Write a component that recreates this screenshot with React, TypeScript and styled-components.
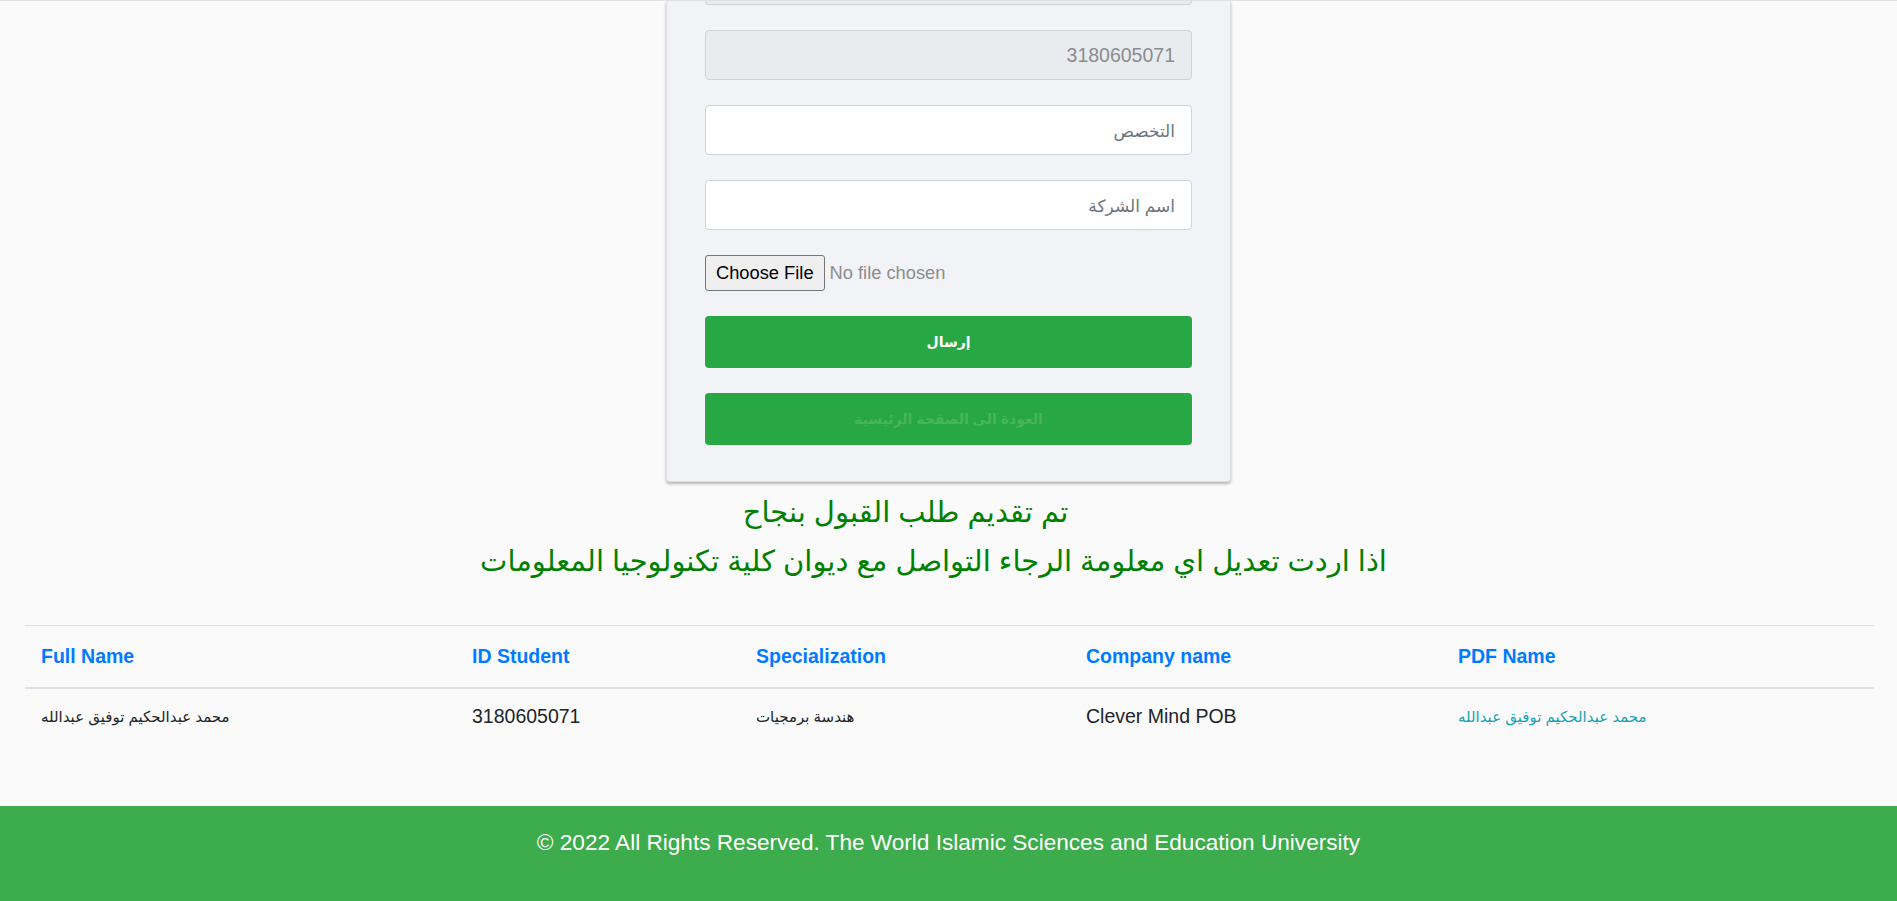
import React from "react";
import styled, { createGlobalStyle } from "styled-components";

const GlobalStyle = createGlobalStyle`
  html, body {
    margin: 0;
    padding: 0;
    background: #fafafa;
    font-family: "Liberation Sans", "DejaVu Sans", Arial, sans-serif;
    color: #212529;
  }
  * { box-sizing: border-box; }
`;

const Page = styled.div`
  display: flex;
  flex-direction: column;
  min-height: 901px;
`;

const TopRule = styled.div`
  height: 1px;
  background: #e2e2e2;
`;

const Main = styled.main`
  display: flex;
  flex-direction: column;
  align-items: center;
`;

const Card = styled.form`
  width: 565px;
  background: #f2f3f7;
  border: 1px solid #e0e0e3;
  border-top: none;
  border-radius: 0 0 4px 4px;
  box-shadow: 0 2px 3px rgba(0, 0, 0, 0.28);
  padding: 0 38px 36px;
  display: flex;
  flex-direction: column;
  gap: 25px;
`;

const StubField = styled.div`
  height: 4px;
  background: #e9ecef;
  border: 1px solid #ced4da;
  border-top: none;
  border-radius: 0 0 4px 4px;
`;

const Field = styled.input`
  height: 50px;
  width: 100%;
  border: 1px solid #ced4da;
  border-radius: 4px;
  background: #ffffff;
  padding: 0 16px;
  direction: rtl;
  text-align: right;
  font-family: "Liberation Sans", "DejaVu Sans", sans-serif;
  font-size: 19.5px;
  color: #495057;
  outline: none;

  &::placeholder {
    color: #6c757d;
    font-size: 17px;
  }

  &:disabled {
    background: #e9ecef;
    color: #8a8d90;
  }
`;

const FileRow = styled.div`
  display: flex;
  align-items: center;
  gap: 5px;
  height: 36px;
`;

const FileButton = styled.button`
  height: 36px;
  padding: 0 10px;
  border: 1px solid #767676;
  border-radius: 3px;
  background: #efefef;
  color: #000;
  font-family: "Liberation Sans", sans-serif;
  font-size: 18.3px;
  cursor: pointer;
`;

const FileStatus = styled.span`
  font-family: "Liberation Sans", sans-serif;
  font-size: 18.3px;
  color: #8d8d8d;
`;

const ActionButton = styled.button<{ $muted?: boolean }>`
  height: 52px;
  width: 100%;
  border: none;
  border-radius: 4px;
  background: #28a745;
  color: ${(p) => (p.$muted ? "#48b557" : "#ffffff")};
  font-family: "Liberation Sans", "DejaVu Sans", sans-serif;
  font-weight: 700;
  font-size: 14px;
  direction: rtl;
  cursor: pointer;
`;

const Notice = styled.div`
  width: 100%;
  margin-top: 6px;
  display: flex;
  flex-direction: column;
  align-items: stretch;
`;

const NoticeLine = styled.h3<{ $shift: number }>`
  margin: 0;
  direction: rtl;
  text-align: center;
  font-family: "Liberation Sans", "DejaVu Sans", sans-serif;
  font-weight: 400;
  font-size: 29px;
  line-height: 49px;
  color: #008000;
  padding-right: ${(p) => p.$shift}px;
`;

const TableWrap = styled.section`
  padding: 39px 23px 0 25px;
`;

const Table = styled.table`
  width: 100%;
  border-collapse: collapse;
  table-layout: fixed;
  font-size: 19.5px;
`;

const HeadCell = styled.th<{ $w: number }>`
  width: ${(p) => p.$w}px;
  text-align: left;
  padding: 16px 16px;
  line-height: 29px;
  font-weight: 700;
  color: #007bff;
  border-top: 1px solid #dee2e6;
  border-bottom: 2px solid #dee2e6;
`;

const Cell = styled.td<{ $arabic?: boolean; $link?: boolean }>`
  padding: 13px 16px;
  line-height: 29px;
  color: ${(p) => (p.$link ? "#17a2b8" : "#212529")};
  font-size: ${(p) => (p.$arabic ? "15px" : "19.5px")};
  vertical-align: top;
`;

const Footer = styled.footer`
  margin-top: 62px;
  flex: 1;
  min-height: 95px;
  background: #3cac4c;
  color: #ffffff;
  text-align: center;
  padding-top: 22px;
  font-size: 22.6px;
  line-height: 29px;
`;

const columns = [
  { label: "Full Name", w: 431 },
  { label: "ID Student", w: 284 },
  { label: "Specialization", w: 330 },
  { label: "Company name", w: 372 },
  { label: "PDF Name", w: 432 },
];

export default function App() {
  return (
    <>
      <GlobalStyle />
      <Page>
        <TopRule />
        <Main>
          <Card onSubmit={(e) => e.preventDefault()}>
            <StubField />
            <Field disabled value="3180605071" readOnly />
            <Field placeholder="التخصص" />
            <Field placeholder="اسم الشركة" />
            <FileRow>
              <FileButton type="button">Choose File</FileButton>
              <FileStatus>No file chosen</FileStatus>
            </FileRow>
            <ActionButton type="submit">إرسال</ActionButton>
            <ActionButton type="button" $muted>
              العودة الى الصفحة الرئيسية
            </ActionButton>
          </Card>
          <Notice>
            <NoticeLine $shift={86}>تم تقديم طلب القبول بنجاح</NoticeLine>
            <NoticeLine $shift={30}>
              اذا اردت تعديل اي معلومة الرجاء التواصل مع ديوان كلية تكنولوجيا المعلومات
            </NoticeLine>
          </Notice>
        </Main>
        <TableWrap>
          <Table>
            <thead>
              <tr>
                {columns.map((c) => (
                  <HeadCell key={c.label} $w={c.w}>
                    {c.label}
                  </HeadCell>
                ))}
              </tr>
            </thead>
            <tbody>
              <tr>
                <Cell $arabic>محمد عبدالحكيم توفيق عبدالله</Cell>
                <Cell>3180605071</Cell>
                <Cell $arabic>هندسة برمجيات</Cell>
                <Cell>Clever Mind POB</Cell>
                <Cell $arabic $link>
                  محمد عبدالحكيم توفيق عبدالله
                </Cell>
              </tr>
            </tbody>
          </Table>
        </TableWrap>
        <Footer>© 2022 All Rights Reserved. The World Islamic Sciences and Education University</Footer>
      </Page>
    </>
  );
}
